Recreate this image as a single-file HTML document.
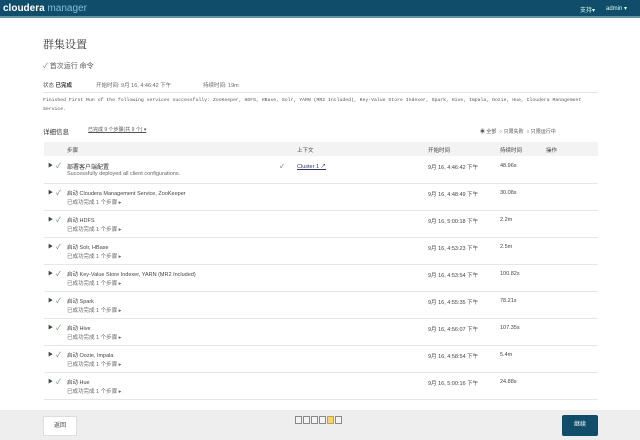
<!DOCTYPE html><html><head><meta charset="utf-8"><style>
*{margin:0;padding:0;box-sizing:border-box}
body{width:640px;height:440px;overflow:hidden;background:#fff;font-family:"Liberation Sans","Noto Sans CJK SC",sans-serif;color:#333;position:relative}
.hdr{position:absolute;left:0;top:0;width:640px;height:18px;background:#0f4d6b;border-bottom:2px solid #5e96a8}
.a{position:absolute;white-space:nowrap}
.row{position:absolute;left:44px;width:554px;height:27px;border-bottom:1px solid #e6e6e6;font-size:5.5px;color:#444}
.row .t{position:absolute;left:23px;top:5px}
.row .s{position:absolute;left:23px;top:14px;color:#666}
.row .ar{position:absolute;left:4px;top:5px;font-size:5px}
.row .ck{position:absolute;left:12px;top:4px;color:#4a8a4a;font-size:7px}
.row .d1{position:absolute;left:384px;top:6px}
.row .d2{position:absolute;left:456px;top:6px}
.foot{position:absolute;left:0;top:410px;width:640px;height:30px;background:#eeeeee}
</style></head><body>
<div class="hdr"><span class="a" style="left:3px;top:3px;font-size:10px;font-weight:bold;color:#fff">cloudera <span style="font-weight:normal;color:#7fc0d6">manager</span></span>
<span class="a" style="left:580px;top:5px;font-size:6px;color:#dfe">支持▾</span><span class="a" style="left:606px;top:5px;font-size:6px;color:#dfe">admin ▾</span></div>
<div class="a" style="left:43px;top:36px;font-size:11px;font-family:'Noto Serif CJK SC',serif;color:#333">群集设置</div>
<div class="a" style="left:43px;top:61px;font-size:7px;color:#555"><span style="color:#4a8a4a">✓</span> 首次运行 命令</div>
<div class="a" style="left:43px;top:81px;font-size:5.5px;color:#555">状态 <b style="color:#333">已完成</b></div>
<div class="a" style="left:96px;top:81px;font-size:5.5px;color:#666">开始时间: 9月 16, 4:46:42 下午</div>
<div class="a" style="left:203px;top:81px;font-size:5.5px;color:#666">持续时间: 19m</div>
<div class="a" style="left:43px;top:92px;width:555px;border-top:1px solid #e4e4e4"></div>
<div class="a" style="left:43px;top:96px;font-size:4.8px;color:#555;font-family:'Liberation Mono',monospace;white-space:normal;width:560px;line-height:9px">Finished First Run of the following services successfully: ZooKeeper, HDFS, HBase, Solr, YARN (MR2 Included), Key-Value Store Indexer, Spark, Hive, Impala, Oozie, Hue, Cloudera Management Service.</div>
<div class="a" style="left:43px;top:126px;font-size:6.5px;color:#333">详细信息</div>
<div class="a" style="left:88px;top:126px;font-size:5px;color:#555;text-decoration:underline">已完成 9 个步骤(共 9 个) ▾</div>
<div class="a" style="left:480px;top:128px;font-size:5px;color:#555">◉ 全部 &nbsp;○ 只限失败 &nbsp;○ 只限运行中</div>
<div class="a" style="left:44px;top:142px;width:554px;height:14px;background:#f3f3f3;font-size:5.5px;color:#444">
<span class="a" style="left:23px;top:4px">步骤</span><span class="a" style="left:253px;top:4px">上下文</span><span class="a" style="left:384px;top:4px">开始时间</span><span class="a" style="left:456px;top:4px">持续时间</span><span class="a" style="left:502px;top:4px">操作</span></div>
<div class="row" style="top:157px"><span class="ar">▶</span><span class="ck">✓</span><span class="t" style="font-size:6px;color:#333">部署客户端配置</span><span class="s">Successfully deployed all client configurations.</span><span class="a" style="left:236px;top:5px">✓</span><span class="a" style="left:253px;top:5px;text-decoration:underline;color:#336">Cluster 1 ↗</span><span class="d1">9月 16, 4:46:42 下午</span><span class="d2">48.96s</span></div>
<div class="row" style="top:184px"><span class="ar">▶</span><span class="ck">✓</span><span class="t">启动 Cloudera Management Service, ZooKeeper</span><span class="s">已成功完成 1 个步骤 ▸</span><span class="d1">9月 16, 4:48:49 下午</span><span class="d2">30.08s</span></div>
<div class="row" style="top:211px"><span class="ar">▶</span><span class="ck">✓</span><span class="t">启动 HDFS</span><span class="s">已成功完成 1 个步骤 ▸</span><span class="d1">9月 16, 5:00:18 下午</span><span class="d2">2.2m</span></div>
<div class="row" style="top:238px"><span class="ar">▶</span><span class="ck">✓</span><span class="t">启动 Solr, HBase</span><span class="s">已成功完成 1 个步骤 ▸</span><span class="d1">9月 16, 4:53:23 下午</span><span class="d2">2.5m</span></div>
<div class="row" style="top:265px"><span class="ar">▶</span><span class="ck">✓</span><span class="t">启动 Key-Value Store Indexer, YARN (MR2 Included)</span><span class="s">已成功完成 1 个步骤 ▸</span><span class="d1">9月 16, 4:53:54 下午</span><span class="d2">100.82s</span></div>
<div class="row" style="top:292px"><span class="ar">▶</span><span class="ck">✓</span><span class="t">启动 Spark</span><span class="s">已成功完成 1 个步骤 ▸</span><span class="d1">9月 16, 4:55:35 下午</span><span class="d2">78.21s</span></div>
<div class="row" style="top:319px"><span class="ar">▶</span><span class="ck">✓</span><span class="t">启动 Hive</span><span class="s">已成功完成 1 个步骤 ▸</span><span class="d1">9月 16, 4:56:07 下午</span><span class="d2">107.35s</span></div>
<div class="row" style="top:346px"><span class="ar">▶</span><span class="ck">✓</span><span class="t">启动 Oozie, Impala</span><span class="s">已成功完成 1 个步骤 ▸</span><span class="d1">9月 16, 4:58:54 下午</span><span class="d2">5.4m</span></div>
<div class="row" style="top:373px"><span class="ar">▶</span><span class="ck">✓</span><span class="t">启动 Hue</span><span class="s">已成功完成 1 个步骤 ▸</span><span class="d1">9月 16, 5:00:16 下午</span><span class="d2">24.88s</span></div>
<div class="foot">
<div class="a" style="left:43px;top:6px;width:34px;height:20px;background:#fff;border:1px solid #ddd;font-size:6px;text-align:center;line-height:18px;color:#444">返回</div>
<div class="a" style="left:295px;top:6px;font-size:0">
<span style="display:inline-block;width:7px;height:8px;border:1px solid #888;background:#f4f4f4;margin-right:1px"></span><span style="display:inline-block;width:7px;height:8px;border:1px solid #888;background:#f4f4f4;margin-right:1px"></span><span style="display:inline-block;width:7px;height:8px;border:1px solid #888;background:#f4f4f4;margin-right:1px"></span><span style="display:inline-block;width:7px;height:8px;border:1px solid #888;background:#f4f4f4;margin-right:1px"></span><span style="display:inline-block;width:7px;height:8px;border:1px solid #c9a04a;background:#f5d56e;margin-right:1px"></span><span style="display:inline-block;width:7px;height:8px;border:1px solid #888;background:#f4f4f4"></span></div>
<div class="a" style="left:562px;top:5px;width:36px;height:21px;background:#0f4d6b;border-radius:2px;font-size:6px;text-align:center;line-height:21px;color:#fff">继续</div>
</div>
</body></html>
